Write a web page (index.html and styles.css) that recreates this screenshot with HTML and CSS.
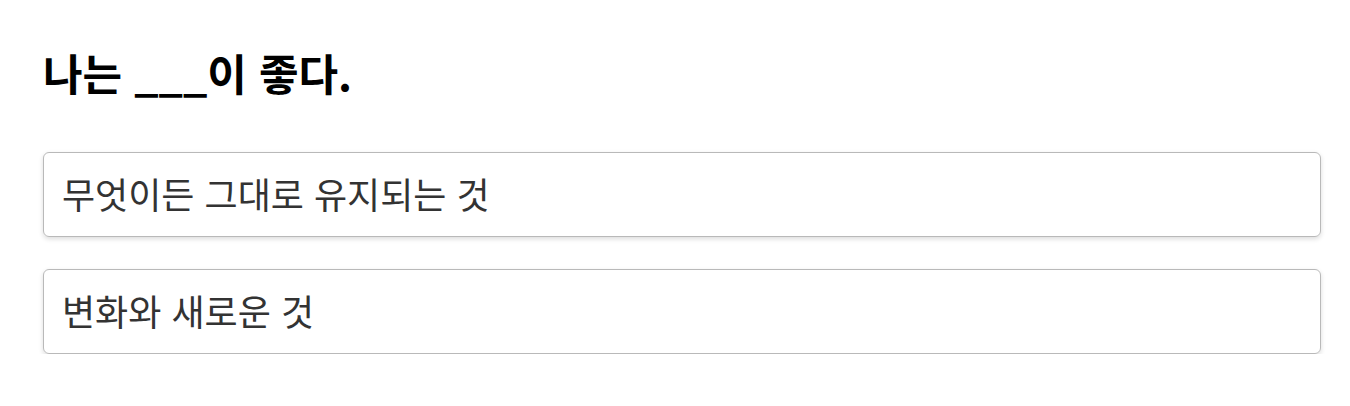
FILE: index.html
```html
<!DOCTYPE html>
<html lang="ko">
<head>
<meta charset="utf-8">
<link rel="stylesheet" href="styles.css">
</head>
<body>
<main class="quiz">
  <h1 class="question">나는 ___이 좋다.</h1>
  <div class="options">
    <div class="option">무엇이든 그대로 유지되는 것</div>
    <div class="option">변화와 새로운 것</div>
  </div>
</main>
</body>
</html>
```

FILE: styles.css
```css
html, body {
  margin: 0;
  padding: 0;
  background: #ffffff;
}
body {
  font-family: "Noto Sans CJK KR", "Noto Sans", sans-serif;
  color: #000;
}
.quiz {
  padding: 42px 29px 0 43px;
}
.question {
  margin: 0;
  font-size: 43px;
  font-weight: 700;
  line-height: 60px;
}
.options {
  margin-top: 50px;
  display: flex;
  flex-direction: column;
  gap: 32px;
}
.option {
  height: 85px;
  box-sizing: border-box;
  border: 1px solid #b9b9b9;
  border-radius: 6px;
  box-shadow: 0 2px 5px rgba(0,0,0,0.14);
  padding: 0 18px 3px;
  display: flex;
  align-items: center;
  font-size: 36px;
  color: #333;
}
```
